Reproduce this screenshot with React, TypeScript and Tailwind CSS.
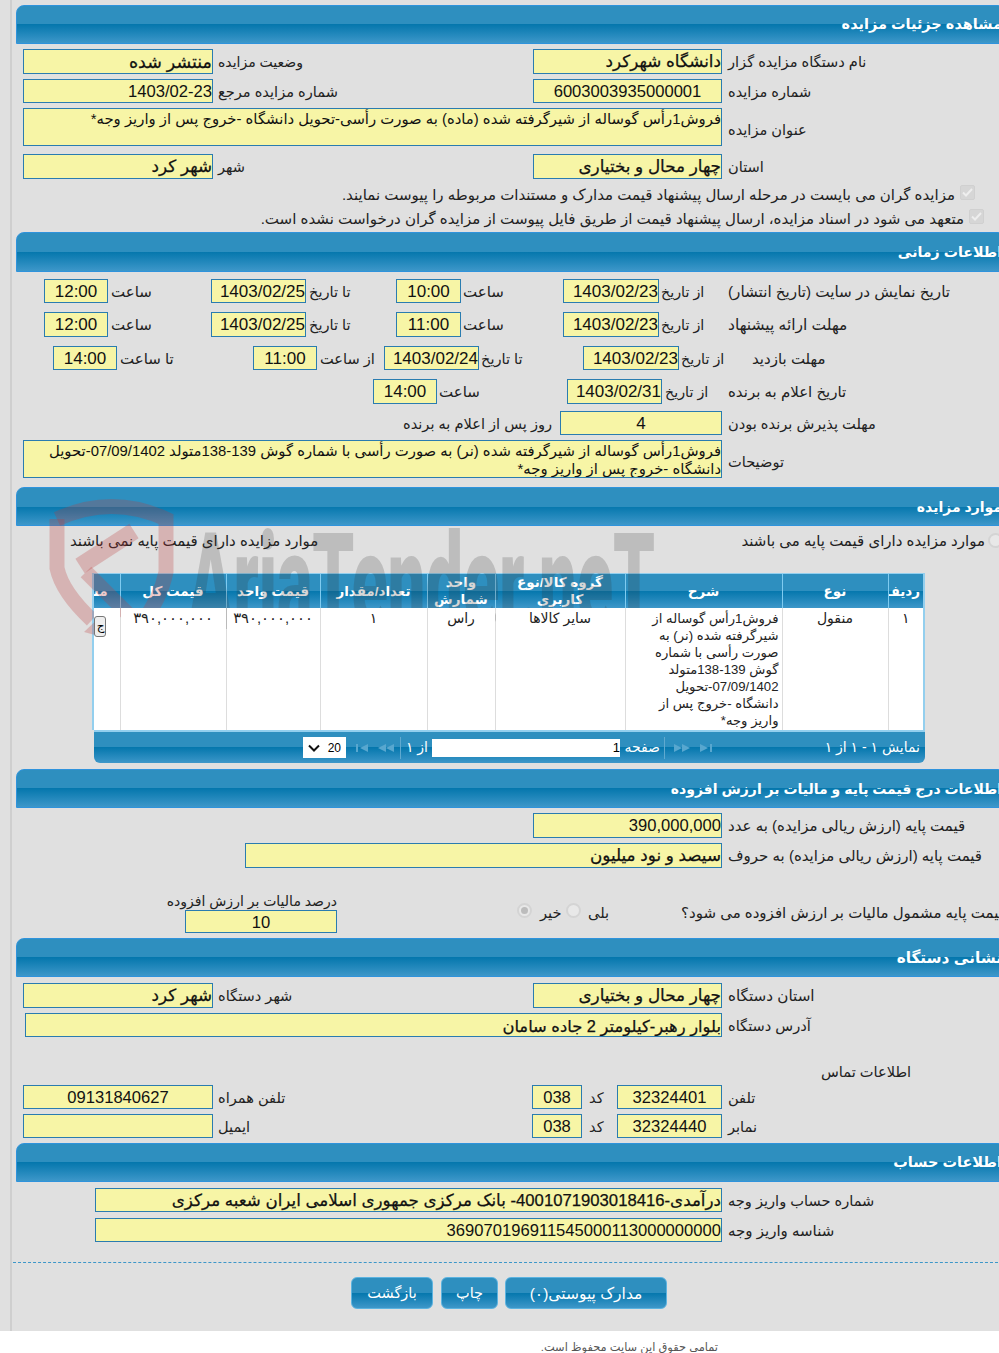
import React from "react";

const hdr = "bg-[linear-gradient(to_bottom,#2e8fbf_0%,#2e8fbf_50%,#0577ad_50%,#3d97c9_100%)]";

function Header({ children, className = "h-[39px]", size = "text-[14.5px]" }: { children: React.ReactNode; className?: string; size?: string }) {
  return (
    <div dir="rtl" className={`w-[990px] ${className} ${size} ${hdr} border border-[#2f93dc] rounded-tr-[8px] rounded-tl-[8px] flex items-center pr-[3px] pt-[1px] text-white font-bold whitespace-nowrap`}>
      {children}
    </div>
  );
}

function Val({ className = "", children, center = false, bold = false, size = "text-[16.6px]" }: { className?: string; children?: React.ReactNode; center?: boolean; bold?: boolean; size?: string }) {
  return (
    <div
      dir="rtl"
      className={`shrink-0 h-full bg-[#f7f5a6] border border-[#2a7cb0] text-[#111] leading-[24px] whitespace-nowrap overflow-hidden ${center ? "text-center" : "text-right"} ${bold ? "[-webkit-text-stroke:0.25px_#111]" : ""} ${size} ${className}`}
    >
      {children}
    </div>
  );
}

function Lbl({ className = "", children, size = "text-[14.6px]" }: { className?: string; children?: React.ReactNode; size?: string }) {
  return (
    <div dir="rtl" className={`shrink-0 text-left leading-[20px] pt-[1px] text-[#222] whitespace-nowrap ${size} ${className}`}>
      {children}
    </div>
  );
}

function Row({ className = "", children }: { className?: string; children: React.ReactNode }) {
  return <div className={`flex items-center ${className}`}>{children}</div>;
}

function Area({ className = "", children }: { className?: string; children: React.ReactNode }) {
  return (
    <div dir="rtl" className={`shrink-0 bg-[#f7f5a6] border border-[#2a7cb0] text-[#111] text-[14.85px] leading-[18px] pt-[1px] text-right h-[38px] overflow-hidden ${className}`}>
      {children}
    </div>
  );
}

function Watermark() {
  return (
    <div className="absolute inset-0 z-10 pointer-events-none overflow-hidden">
      <svg className="absolute left-[40px] top-[490px]" width="150" height="160" viewBox="40 490 150 160" fill="none">
        <path d="M57 519 Q112 494 166 519 V572 Q160 600 142 622" stroke="rgba(190,60,60,0.27)" strokeWidth="15" />
        <path d="M57 519 V568 Q62 592 92 620" stroke="rgba(190,60,60,0.27)" strokeWidth="15" />
        <path d="M84 632 L105 612 L106 638 Z" fill="rgba(190,60,60,0.27)" />
        <path d="M80 566 L134 531" stroke="rgba(190,60,60,0.27)" strokeWidth="17" />
        <path d="M86 572 L138 624" stroke="rgba(190,60,60,0.27)" strokeWidth="15" />
      </svg>
      <div className="absolute left-[188px] top-[508px] origin-top-left scale-x-[0.49] text-[136px] leading-[150px] font-black whitespace-nowrap text-[rgba(50,50,50,0.2)] font-['Roboto',sans-serif]">
        AriaTender.neT
      </div>
    </div>
  );
}

function Table() {
  const th = "border-l border-[#7fcbf0] font-bold text-white text-[13.5px] leading-[17px] text-center align-middle px-1 overflow-hidden";
  const td = "border-l border-[#ddd] align-top text-center text-[14px] leading-[17px] text-[#222] pt-[2px] px-1";
  return (
    <div dir="rtl" className="ml-[76px] w-[833px]">
      <div className="border-2 border-t border-[#93cfee] border-b-0 overflow-hidden">
        <table className="w-[829px] table-fixed border-collapse">
          <colgroup>
            <col className="w-[35px]" />
            <col className="w-[106px]" />
            <col className="w-[157px]" />
            <col className="w-[130px]" />
            <col className="w-[68px]" />
            <col className="w-[107px]" />
            <col className="w-[94px]" />
            <col className="w-[106px]" />
            <col className="w-[26px]" />
          </colgroup>
          <thead>
            <tr className={`h-[34px] ${hdr}`}>
              <th className={th}>ردیف</th>
              <th className={th}>نوع</th>
              <th className={th}>شرح</th>
              <th className={th}>گروه کالا/نوع کاربری</th>
              <th className={th}>واحد شمارش</th>
              <th className={th}>تعداد/مقدار</th>
              <th className={th}>قیمت واحد</th>
              <th className={th}>قیمت کل</th>
              <th className="font-bold text-white text-[13.5px] leading-[17px] text-right pr-[12px] whitespace-nowrap overflow-hidden">مشاهده</th>
            </tr>
          </thead>
          <tbody className="relative z-20">
            <tr className="h-[122px] bg-white">
              <td className={td}>۱</td>
              <td className={td}>منقول</td>
              <td className="border-l border-[#ddd] align-top text-right text-[13.2px] leading-[17px] text-[#222] pt-[2px] pr-[3px] pl-[24px]">فروش1رأس گوساله از شیرگرفته شده (نر) به صورت رأسی با شماره گوش 139-138متولد 07/09/1402-تحویل دانشگاه -خروج پس از واریز وجه*</td>
              <td className={td}>سایر کالاها</td>
              <td className={td}>راس</td>
              <td className={td}>۱</td>
              <td className="border-l border-[#ddd] align-top text-center text-[14.8px] leading-[17px] text-[#222] pt-[2px] whitespace-nowrap">۳۹۰,۰۰۰,۰۰۰</td>
              <td className="border-l border-[#ddd] align-top text-center text-[14.8px] leading-[17px] text-[#222] pt-[2px] whitespace-nowrap">۳۹۰,۰۰۰,۰۰۰</td>
              <td className="align-top pt-[8px] overflow-hidden">
                <div className="w-[12px] h-[21px] mr-[14px] border border-[#777] rounded-[3px] bg-[#eee] text-[12px] leading-[19px] text-right">ج</div>
              </td>
            </tr>
          </tbody>
        </table>
      </div>
      <div className={`relative z-20 h-[33px] ml-[2px] border-t-2 border-[#93cfee] rounded-b-[6px] ${hdr} flex items-center text-white text-[14px] whitespace-nowrap`}>
        <div className="pr-[5px] w-[213px] shrink-0">نمایش ۱ - ۱ از ۱</div>
        <div className="flex gap-[10px] w-[47px] shrink-0">
          <svg width="12" height="8" viewBox="0 0 12 8"><path d="M12 0v8H10V0zM0 0l8 4-8 4z" fill="#58a7cf" /></svg>
          <svg width="16" height="8" viewBox="0 0 16 8"><path d="M0 0l8 4-8 4zM8 0l8 4-8 4z" fill="#58a7cf" /></svg>
        </div>
        <div className="w-px h-[22px] bg-[#5fa9cf] shrink-0" />
        <div className="w-[35px] mr-[4px] ml-[5px] shrink-0">صفحه</div>
        <div className="w-[188px] h-[18px] bg-white text-black text-[13px] leading-[18px] shrink-0"><span className="block text-right" dir="ltr">1</span></div>
        <div className="mr-[4px] w-[22px] shrink-0 text-center">از ۱</div>
        <div className="w-px h-[22px] bg-[#5fa9cf] mr-[5px] shrink-0" />
        <div className="flex gap-[10px] w-[54px] pr-[6px] shrink-0">
          <svg width="16" height="8" viewBox="0 0 16 8"><path d="M16 0L8 4l8 4zM8 0L0 4l8 4z" fill="#58a7cf" /></svg>
          <svg width="12" height="8" viewBox="0 0 12 8"><path d="M0 0v8h2V0zM12 0L4 4l8 4z" fill="#58a7cf" /></svg>
        </div>
        <div dir="ltr" className="w-[43px] h-[21px] bg-white text-black flex items-center justify-between px-[5px] text-[12px] shrink-0">
          <svg width="12" height="8" viewBox="0 0 12 8" fill="none"><path d="M1 1.5l5 5 5-5" stroke="#111" strokeWidth="2" /></svg>
          <span>20</span>
        </div>
      </div>
    </div>
  );
}

function Radio({ className = "", dot = false }: { className?: string; dot?: boolean }) {
  return (
    <div className={`shrink-0 w-[15px] h-[15px] rounded-full border-2 border-[#d4d4d4] bg-[#e8e8e8] flex items-center justify-center ${className}`}>
      {dot && <div className="w-[7px] h-[7px] rounded-full bg-[#bcbcbc]" />}
    </div>
  );
}

function Check({ className = "" }: { className?: string }) {
  return (
    <div className={`shrink-0 w-[15px] h-[15px] rounded-[2px] bg-[#d6d6d6] border border-[#d0d0d0] flex items-center justify-center ${className}`}>
      <svg width="11" height="9" viewBox="0 0 11 9" fill="none"><path d="M1 4.5l3 3 6-6.5" stroke="#eee" strokeWidth="2" /></svg>
    </div>
  );
}

function Btn({ className = "", children }: { className?: string; children: React.ReactNode }) {
  return (
    <div dir="rtl" className={`h-[32px] pt-[1px] ${hdr} border border-[#5cb3e0] rounded-[6px] text-white flex items-center justify-center whitespace-nowrap ${className}`}>
      {children}
    </div>
  );
}

const time = "text-[17px]";
const strong = "text-[16.8px]";

export default function App() {
  return (
    <div className="relative w-[999px] h-[1353px] overflow-hidden bg-white font-['Liberation_Sans','DejaVu_Sans',sans-serif]">
      <Watermark />
      <div className="h-[1331px] bg-[#e0e0e0] pl-[10px]">
        <div className="h-full border-l-2 border-[#cfcfcf] pl-[4px] pt-[5px] w-[1000px]">
          <Header>مشاهده جزئیات مزایده</Header>
          <Row className="h-[25px] mt-[5px]">
            <Val bold size="text-[17.5px]" className="ml-[7px] w-[190px]">منتشر شده</Val>
            <Lbl size="text-[14px]" className="ml-[5px] w-[315px]">وضعیت مزایده</Lbl>
            <Val bold size={strong} className="w-[189px]">دانشگاه شهرکرد</Val>
            <Lbl className="ml-[6px]">نام دستگاه مزایده گزار</Lbl>
          </Row>
          <Row className="h-[24px] mt-[5px]">
            <Val className="ml-[7px] w-[190px]">1403/02-23</Val>
            <Lbl className="ml-[5px] w-[315px]">شماره مزایده مرجع</Lbl>
            <Val center className="w-[189px]">6003003935000001</Val>
            <Lbl className="ml-[6px]">شماره مزایده</Lbl>
          </Row>
          <Row className="mt-[5px]">
            <Area className="ml-[7px] w-[699px]">فروش1رأس گوساله از شیرگرفته شده (ماده) به صورت رأسی-تحویل دانشگاه -خروج پس از واریز وجه*</Area>
            <Lbl className="ml-[6px] pt-[5px]">عنوان مزایده</Lbl>
          </Row>
          <Row className="h-[25px] mt-[8px]">
            <Val bold size={strong} className="ml-[7px] w-[190px]">شهر کرد</Val>
            <Lbl className="ml-[5px] w-[315px]">شهر</Lbl>
            <Val bold size={strong} className="w-[189px]">چهار محال و بختیاری</Val>
            <Lbl className="ml-[6px]">استان</Lbl>
          </Row>
          <Row className="h-[20px] mt-[5px] justify-end pr-[35px]">
            <Lbl size="text-[15px]" className="mt-[1px]">مزایده گران می بایست در مرحله ارسال پیشنهاد قیمت مدارک و مستندات مربوطه را پیوست نمایند.</Lbl>
            <Check className="ml-[5px] -mt-[3px]" />
          </Row>
          <Row className="h-[20px] mt-[4px] justify-end pr-[26px]">
            <Lbl size="text-[15.05px]" className="mt-[1px]">متعهد می شود در اسناد مزایده، ارسال پیشنهاد قیمت از طریق فایل پیوست از مزایده گران درخواست نشده است.</Lbl>
            <Check className="ml-[5px] -mt-[3px]" />
          </Row>

          <div className="mt-[4px]"><Header size="text-[14.2px]" className="h-[40px]">اطلاعات زمانی</Header></div>
          <Row className="h-[24px] mt-[7px]">
            <Val center size={time} className="ml-[28px] w-[64px]">12:00</Val>
            <Lbl size="text-[15px]" className="ml-[3px] w-[100px]">ساعت</Lbl>
            <Val size={time} className="w-[95px]">1403/02/25</Val>
            <Lbl className="ml-[3px] w-[87px]">تا تاریخ</Lbl>
            <Val center size={time} className="w-[65px]">10:00</Val>
            <Lbl size="text-[15px]" className="ml-[2px] w-[100px]">ساعت</Lbl>
            <Val size={time} className="w-[96px]">1403/02/23</Val>
            <Lbl size="text-[14.3px]" className="ml-[2px] w-[67px]">از تاریخ</Lbl>
            <Lbl size="text-[15.2px]">تاریخ نمایش در سایت (تاریخ انتشار)</Lbl>
          </Row>
          <Row className="h-[25px] mt-[9px]">
            <Val center size={time} className="ml-[28px] w-[64px]">12:00</Val>
            <Lbl size="text-[15px]" className="ml-[3px] w-[100px]">ساعت</Lbl>
            <Val size={time} className="w-[95px]">1403/02/25</Val>
            <Lbl className="ml-[3px] w-[87px]">تا تاریخ</Lbl>
            <Val center size={time} className="w-[65px]">11:00</Val>
            <Lbl size="text-[15px]" className="ml-[2px] w-[100px]">ساعت</Lbl>
            <Val size={time} className="w-[96px]">1403/02/23</Val>
            <Lbl size="text-[14.3px]" className="ml-[2px] w-[67px]">از تاریخ</Lbl>
            <Lbl size="text-[15.5px]">مهلت ارائه پیشنهاد</Lbl>
          </Row>
          <Row className="h-[24px] mt-[9px]">
            <Val center size={time} className="ml-[37px] w-[64px]">14:00</Val>
            <Lbl size="text-[15px]" className="ml-[3px] w-[133px]">تا ساعت</Lbl>
            <Val center size={time} className="w-[64px]">11:00</Val>
            <Lbl className="ml-[3px] w-[64px]">از ساعت</Lbl>
            <Val size={time} className="w-[95px]">1403/02/24</Val>
            <Lbl className="ml-[2px] w-[102px]">تا تاریخ</Lbl>
            <Val size={time} className="w-[96px]">1403/02/23</Val>
            <Lbl size="text-[14.3px]" className="ml-[2px] w-[71px]">از تاریخ</Lbl>
            <Lbl size="text-[15px]">مهلت بازدید</Lbl>
          </Row>
          <Row className="h-[25px] mt-[9px]">
            <Val center size={time} className="ml-[357px] w-[64px]">14:00</Val>
            <Lbl size="text-[15px]" className="ml-[2px] w-[128px]">ساعت</Lbl>
            <Val size={time} className="w-[95px]">1403/02/31</Val>
            <Lbl size="text-[14.3px]" className="ml-[3px] w-[63px]">از تاریخ</Lbl>
            <Lbl size="text-[15px]">تاریخ اعلام به برنده</Lbl>
          </Row>
          <Row className="h-[24px] mt-[7px]">
            <Lbl className="ml-[387px] w-[157px]">روز پس از اعلام به برنده</Lbl>
            <Val center size={time} className="w-[162px]">4</Val>
            <Lbl className="ml-[6px]">مهلت پذیرش برنده بودن</Lbl>
          </Row>
          <Row className="mt-[5px]">
            <Area className="ml-[7px] w-[699px]">فروش1رأس گوساله از شیرگرفته شده (نر) به صورت رأسی با شماره گوش 139-138متولد 07/09/1402-تحویل دانشگاه -خروج پس از واریز وجه*</Area>
            <Lbl className="ml-[6px] pt-[5px]">توضیحات</Lbl>
          </Row>

          <div className="mt-[9px]"><Header size="text-[14px]">موارد مزایده</Header></div>
          <Row className="h-[20px] mt-[4px]">
            <Lbl size="text-[15px]" className="ml-[54px] w-[249px]">موارد مزایده دارای قیمت پایه نمی باشند</Lbl>
            <Lbl size="text-[15px]" className="ml-[423px] w-[243px]">موارد مزایده دارای قیمت پایه می باشند</Lbl>
            <Radio className="ml-[3px]" />
          </Row>
          <div className="mt-[23px]"><Table /></div>

          <div className="mt-[6px]"><Header size="text-[14px]">اطلاعات درج قیمت پایه و مالیات بر ارزش افزوده</Header></div>
          <Row className="h-[25px] mt-[5px]">
            <Val className="ml-[517px] w-[189px]">390,000,000</Val>
            <Lbl size="text-[15px]" className="ml-[6px]">قیمت پایه (ارزش ریالی مزایده) به عدد</Lbl>
          </Row>
          <Row className="h-[25px] mt-[5px]">
            <Val bold size={strong} className="ml-[229px] w-[477px]">سیصد و نود میلیون</Val>
            <Lbl size="text-[15px]" className="ml-[6px]">قیمت پایه (ارزش ریالی مزایده) به حروف</Lbl>
          </Row>
          <div className="flex items-end h-[41px] mt-[24px]">
            <div className="ml-[153px] w-[168px] shrink-0">
              <div dir="rtl" className="text-[14px] leading-[17px] text-[#222] text-right whitespace-nowrap">درصد مالیات بر ارزش افزوده</div>
              <div className="h-[23px] ml-[16px]"><Val center className="w-[152px]">10</Val></div>
            </div>
            <Radio dot className="ml-[180px] mb-[15px]" />
            <Lbl className="ml-[8px] w-[24px] mb-[10px]">خیر</Lbl>
            <Radio className="ml-[2px] mb-[15px]" />
            <Lbl className="ml-[7px] w-[93px] mb-[10px]">بلی</Lbl>
            <Lbl size="text-[15px]" className="mb-[10px]">قیمت پایه مشمول مالیات بر ارزش افزوده می شود؟</Lbl>
          </div>

          <div className="mt-[5px]"><Header size="text-[15.3px]">نشانی دستگاه</Header></div>
          <Row className="h-[25px] mt-[6px]">
            <Val bold size={strong} className="ml-[7px] w-[190px]">شهر کرد</Val>
            <Lbl className="ml-[5px] w-[315px]">شهر دستگاه</Lbl>
            <Val bold size={strong} className="w-[189px]">چهار محال و بختیاری</Val>
            <Lbl size="text-[15.2px]" className="ml-[6px]">استان دستگاه</Lbl>
          </Row>
          <Row className="h-[24px] mt-[5px]">
            <Val bold size="text-[16.35px]" className="ml-[9px] w-[697px]">بلوار رهبر-کیلومتر 2 جاده سامان</Val>
            <Lbl className="ml-[6px]">آدرس دستگاه</Lbl>
          </Row>
          <Row className="h-[20px] mt-[24px]">
            <Lbl className="ml-[805px]">اطلاعات تماس</Lbl>
          </Row>
          <Row className="h-[24px] mt-[4px]">
            <Val center className="ml-[7px] w-[190px]">09131840627</Val>
            <Lbl className="ml-[5px] w-[314px]">تلفن همراه</Lbl>
            <Val center className="w-[50px]">038</Val>
            <Lbl className="ml-[7px] w-[28px]">کد</Lbl>
            <Val center className="w-[105px]">32324401</Val>
            <Lbl className="ml-[6px]">تلفن</Lbl>
          </Row>
          <Row className="h-[24px] mt-[5px]">
            <Val className="ml-[7px] w-[190px]" />
            <Lbl className="ml-[5px] w-[314px]">ایمیل</Lbl>
            <Val center className="w-[50px]">038</Val>
            <Lbl className="ml-[7px] w-[28px]">کد</Lbl>
            <Val center className="w-[105px]">32324440</Val>
            <Lbl className="ml-[6px]">نمابر</Lbl>
          </Row>

          <div className="mt-[5px]"><Header>اطلاعات حساب</Header></div>
          <Row className="h-[24px] mt-[6px]">
            <Val bold size="text-[16.7px]" className="ml-[79px] w-[627px]">درآمدی-4001071903018416- بانک مرکزی جمهوری اسلامی ایران شعبه مرکزی</Val>
            <Lbl className="ml-[6px]">شماره حساب واریز وجه</Lbl>
          </Row>
          <Row className="h-[24px] mt-[6px]">
            <Val className="ml-[79px] w-[627px]">369070196911545000113000000000</Val>
            <Lbl size="text-[15px]" className="ml-[6px]">شناسه واریز وجه</Lbl>
          </Row>
          <div className="mt-[20px] -ml-[3px] w-[990px] border-t border-dashed border-[#3d97c9]" />
          <div className="mt-[14px] flex items-center">
            <Btn className="ml-[335px] w-[82px] text-[14.5px]">بازگشت</Btn>
            <Btn className="ml-[8px] w-[57px] text-[14.5px]">چاپ</Btn>
            <Btn className="ml-[7px] w-[162px] text-[15.5px]">مدارک پیوستی(۰)</Btn>
          </div>
        </div>
      </div>
      <div dir="rtl" className="pt-[9px] pr-[281px] text-right text-[11.4px] leading-[14px] text-[#555]">تمامی حقوق این سایت محفوظ است.</div>
    </div>
  );
}
